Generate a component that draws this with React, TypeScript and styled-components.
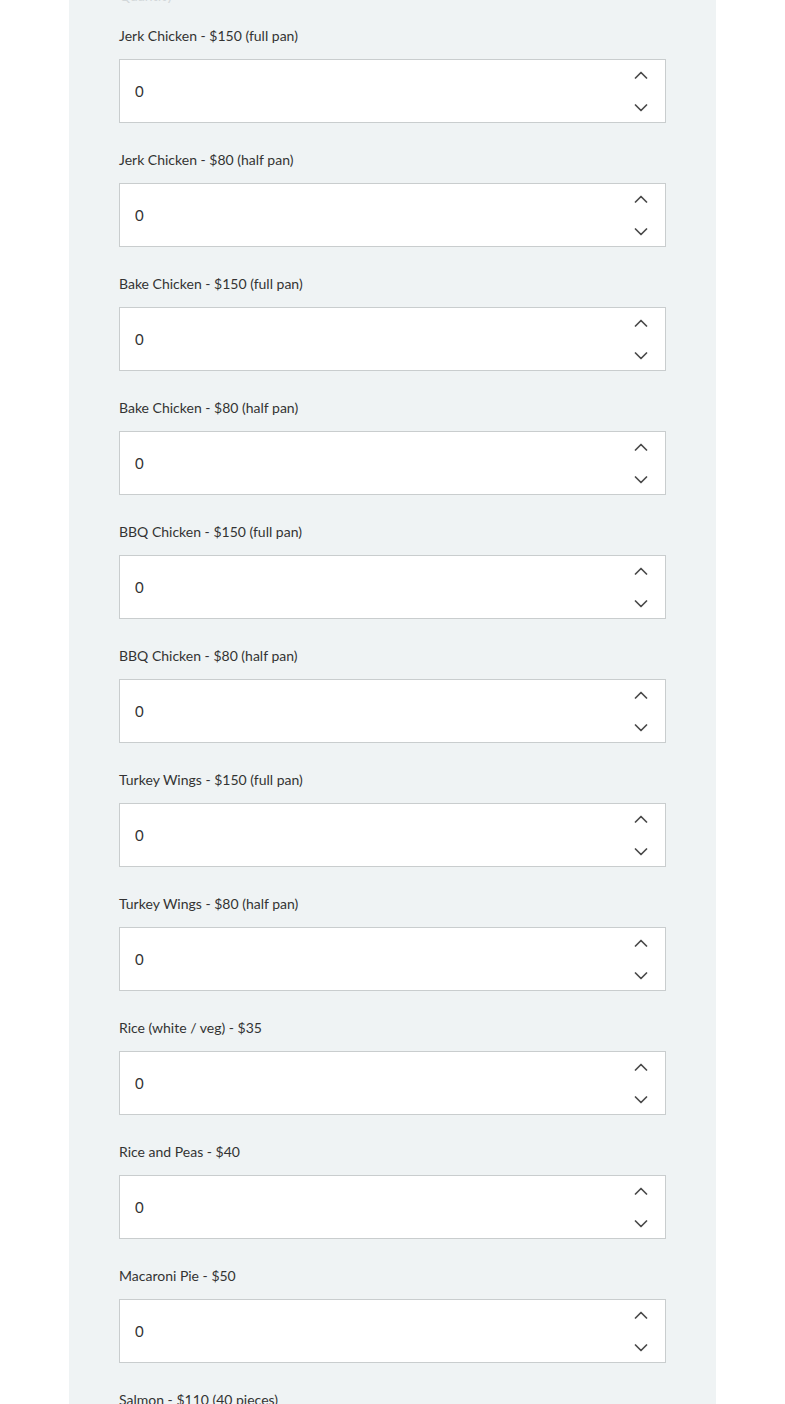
import React from "react";
import styled, { createGlobalStyle } from "styled-components";

const Global = createGlobalStyle`
  html, body { margin: 0; padding: 0; background: #ffffff; }
  body { font-family: "Lato", "Noto Sans", sans-serif; overflow: hidden; }
`;

const Page = styled.div`
  height: 1404px;
  overflow: hidden;
`;

const Panel = styled.div`
  margin-left: 69px;
  width: 647px;
  min-height: 1404px;
  background: #eff3f4;
  padding: 0 50px;
  box-sizing: border-box;
`;

const Heading = styled.div`
  margin-top: -14px;
  margin-bottom: 20px;
  font-size: 14px;
  line-height: 20px;
  color: #d3d8da;
`;

const Field = styled.div`
  display: flex;
  flex-direction: column;
  margin-bottom: 27px;
`;

const Label = styled.label`
  font-size: 14px;
  line-height: 20px;
  color: #333333;
  margin-bottom: 13px;
`;

const InputBox = styled.div`
  display: flex;
  height: 64px;
  box-sizing: border-box;
  border: 1px solid #c9cdce;
  background: #ffffff;
`;

const NumberInput = styled.input`
  flex: 1;
  min-width: 0;
  border: none;
  outline: none;
  background: transparent;
  padding: 0 0 0 15px;
  font-family: "Lato", "Noto Sans", sans-serif;
  font-size: 15px;
  color: #333333;
  &::-webkit-outer-spin-button,
  &::-webkit-inner-spin-button { -webkit-appearance: none; margin: 0; }
  -moz-appearance: textfield;
`;

const Spinner = styled.div`
  width: 48px;
  display: flex;
  flex-direction: column;
  justify-content: space-between;
  padding: 1px 0 0;
  box-sizing: border-box;
`;

const SpinButton = styled.button`
  height: 28px;
  border: none;
  background: transparent;
  padding: 0;
  display: flex;
  align-items: center;
  justify-content: center;
  cursor: pointer;
  color: #4a4a4a;
`;

const Chevron = ({ up }: { up?: boolean }) => (
  <svg width="14" height="8" viewBox="0 0 14 8" fill="none">
    <polyline
      points={up ? "1.5,7 7,1.5 12.5,7" : "1.5,1 7,6.5 12.5,1"}
      stroke="currentColor"
      strokeWidth="1.7"
      strokeLinecap="round"
      strokeLinejoin="round"
    />
  </svg>
);

const items = [
  "Jerk Chicken - $150 (full pan)",
  "Jerk Chicken - $80 (half pan)",
  "Bake Chicken - $150 (full pan)",
  "Bake Chicken - $80 (half pan)",
  "BBQ Chicken - $150 (full pan)",
  "BBQ Chicken - $80 (half pan)",
  "Turkey Wings - $150 (full pan)",
  "Turkey Wings - $80 (half pan)",
  "Rice (white / veg) - $35",
  "Rice and Peas - $40",
  "Macaroni Pie - $50",
  "Salmon - $110 (40 pieces)",
];

export default function App() {
  return (
    <Page>
      <Global />
      <Panel>
        <Heading>Quantity</Heading>
        {items.map((label, i) => (
          <Field key={i}>
            <Label htmlFor={`q${i}`}>{label}</Label>
            <InputBox>
              <NumberInput id={`q${i}`} type="number" defaultValue={0} />
              <Spinner>
                <SpinButton type="button" aria-label="increase">
                  <Chevron up />
                </SpinButton>
                <SpinButton type="button" aria-label="decrease">
                  <Chevron />
                </SpinButton>
              </Spinner>
            </InputBox>
          </Field>
        ))}
      </Panel>
    </Page>
  );
}
